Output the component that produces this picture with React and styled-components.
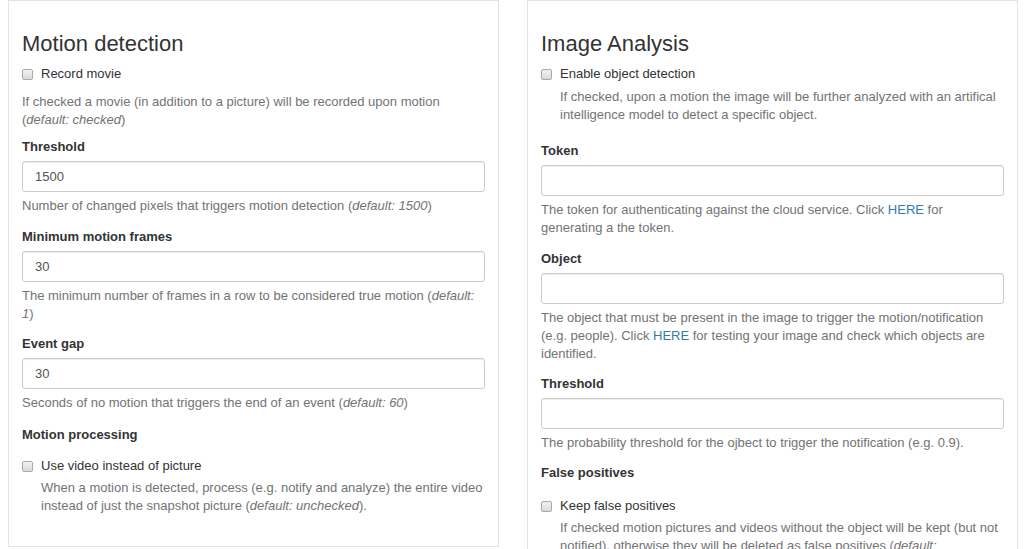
import React, { useState } from 'react';
import styled, { createGlobalStyle } from 'styled-components';

const GlobalStyle = createGlobalStyle`
  html, body {
    margin: 0;
    padding: 0;
    background: #fff;
  }
  body {
    font-family: "Liberation Sans", Arial, Helvetica, sans-serif;
    font-size: 13px;
    line-height: 18px;
    color: #333;
  }
  * { box-sizing: border-box; }
`;

const Page = styled.div`
  display: grid;
  grid-template-columns: 491px 491px;
  column-gap: 28px;
  align-items: start;
  padding: 0 6px 0 8px;
`;

const Panel = styled.section`
  background: #fff;
  border: 1px solid #e4e4e4;
  padding: 31px 13px 16px 13px;
  min-height: ${p => p.$minHeight || 0}px;
`;

const Title = styled.h3`
  margin: 0 0 9px 0;
  font-size: 22px;
  line-height: 24px;
  font-weight: 400;
  color: #333;
`;

const Group = styled.div`
  margin-bottom: ${p => (p.$gap !== undefined ? p.$gap : 13)}px;
`;

const Label = styled.label`
  display: block;
  font-weight: 700;
  margin-bottom: ${p => (p.$gap !== undefined ? p.$gap : 5)}px;
`;

const Input = styled.input`
  display: block;
  width: 100%;
  height: 31px;
  padding: 0 12px;
  font-family: inherit;
  font-size: 13px;
  color: #555;
  background: #fff;
  border: 1px solid #ccc;
  border-radius: 3px;
  box-shadow: inset 0 1px 1px rgba(0, 0, 0, 0.075);
  outline: 0;

  &:focus {
    border-color: #66afe9;
  }
`;

const CheckRow = styled.label`
  display: flex;
  align-items: center;
  line-height: 18px;
  color: #333;
  cursor: pointer;
`;

const Checkbox = styled.input.attrs({ type: 'checkbox' })`
  appearance: none;
  -webkit-appearance: none;
  width: 11px;
  height: 11px;
  margin: 0 8px 0 0;
  border: 1px solid #a9a9a9;
  border-radius: 2px;
  background: linear-gradient(#f2f2f2, #d9d9d9);
  flex: none;

  &:checked {
    background: #337ab7;
    border-color: #2e6da4;
  }
`;

const Help = styled.p`
  margin: ${p => p.$top || 5}px 0 0 ${p => (p.$indent ? 19 : 0)}px;
  color: #737373;

  em { font-style: italic; }
`;

const Link = styled.a`
  color: #337ab7;
  text-decoration: none;
`;

const CheckField = ({ label, gap, children }) => {
  const [checked, setChecked] = useState(false);
  return (
    <Group $gap={gap}>
      <CheckRow>
        <Checkbox checked={checked} onChange={e => setChecked(e.target.checked)} />
        {label}
      </CheckRow>
      {children}
    </Group>
  );
};

const TextField = ({ label, value, gap, children }) => {
  const [val, setVal] = useState(value || '');
  return (
    <Group $gap={gap}>
      <Label>{label}</Label>
      <Input type="text" value={val} onChange={e => setVal(e.target.value)} />
      <Help>{children}</Help>
    </Group>
  );
};

const App = () => {
  return (
    <>
      <GlobalStyle />
      <Page>
        <Panel $minHeight={547}>
          <Title>Motion detection</Title>
          <CheckField label="Record movie" gap={9}>
            <Help $top={10}>
              If checked a movie (in addition to a picture) will be recorded upon motion (<em>default: checked</em>)
            </Help>
          </CheckField>
          <TextField label="Threshold" value="1500">
            Number of changed pixels that triggers motion detection (<em>default: 1500</em>)
          </TextField>
          <TextField label="Minimum motion frames" value="30" gap={12}>
            The minimum number of frames in a row to be considered true motion (<em>default: 1</em>)
          </TextField>
          <TextField label="Event gap" value="30" gap={14}>
            Seconds of no motion that triggers the end of an event (<em>default: 60</em>)
          </TextField>
          <Group $gap={0}>
            <Label $gap={13}>Motion processing</Label>
            <CheckField label="Use video instead of picture" gap={0}>
              <Help $indent $top={4}>
                When a motion is detected, process (e.g. notify and analyze) the entire video instead of just the snapshot picture (<em>default: unchecked</em>).
              </Help>
            </CheckField>
          </Group>
        </Panel>

        <Panel>
          <Title>Image Analysis</Title>
          <CheckField label="Enable object detection" gap={18}>
            <Help $indent $top={5}>
              If checked, upon a motion the image will be further analyzed with an artifical intelligence model to detect a specific object.
            </Help>
          </CheckField>
          <TextField label="Token">
            The token for authenticating against the cloud service. Click <Link href="#">HERE</Link> for generating a the token.
          </TextField>
          <TextField label="Object" gap={12}>
            The object that must be present in the image to trigger the motion/notification (e.g. people). Click <Link href="#">HERE</Link> for testing your image and check which objects are identified.
          </TextField>
          <TextField label="Threshold" gap={12}>
            The probability threshold for the ojbect to trigger the notification (e.g. 0.9).
          </TextField>
          <Group $gap={0}>
            <Label $gap={15}>False positives</Label>
            <CheckField label="Keep false positives" gap={0}>
              <Help $indent $top={4}>
                If checked motion pictures and videos without the object will be kept (but not notified), otherwise they will be deleted as false positives (<em>default: unchecked</em>).
              </Help>
            </CheckField>
          </Group>
        </Panel>
      </Page>
    </>
  );
};

export default App;
